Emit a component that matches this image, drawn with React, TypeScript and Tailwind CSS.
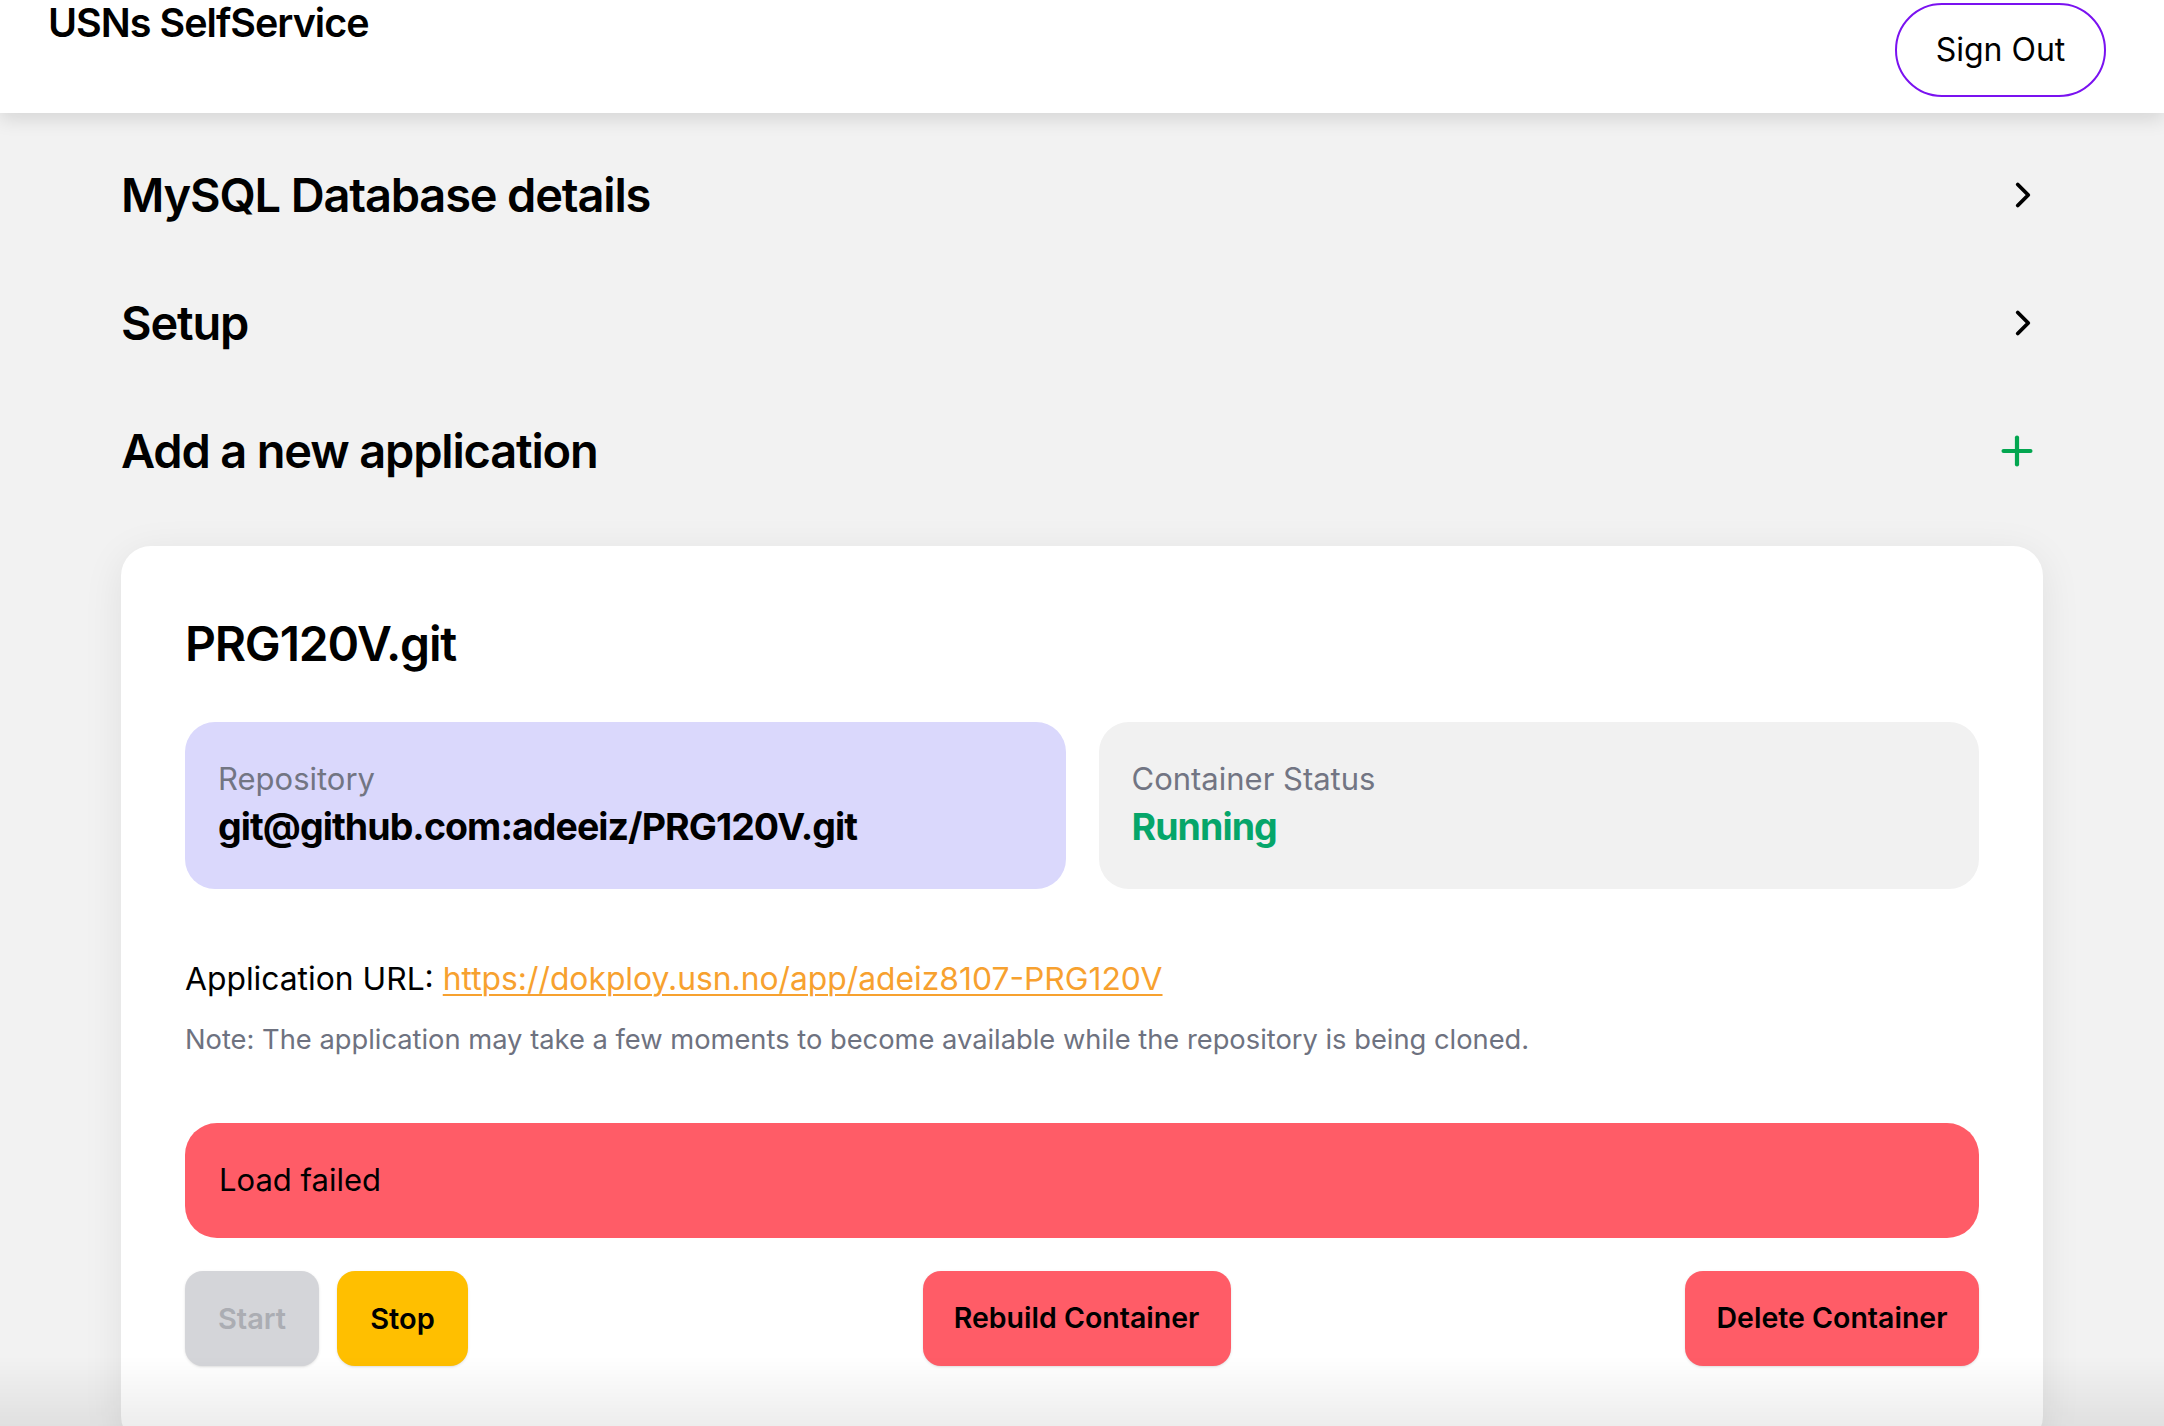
import { ChevronRight, Plus } from "lucide-react";

function SectionRow({ title, icon }: { title: string; icon: "chevron" | "plus" }) {
  return (
    <div className="flex items-center justify-between h-[128px]">
      <h2 className="text-[47px] font-semibold tracking-tight text-black">{title}</h2>
      {icon === "chevron" ? (
        <ChevronRight className="w-[42px] h-[42px] text-black mr-[-1px]" strokeWidth={2.2} />
      ) : (
        <Plus className="w-[46px] h-[46px] text-[#03a650] mr-[3px]" strokeWidth={2.2} />
      )}
    </div>
  );
}

function InfoBox({ label, value, tone }: { label: string; value: string; tone: "repo" | "status" }) {
  return (
    <div
      className={
        tone === "repo"
          ? "flex-1 h-[167px] rounded-[30px] bg-[#dad8fc] px-[33px] flex flex-col justify-center"
          : "flex-1 h-[167px] rounded-[30px] bg-[#f1f1f1] px-[33px] flex flex-col justify-center"
      }
    >
      <span className="text-[31px] text-[#727583] leading-tight">{label}</span>
      <span
        className={
          tone === "repo"
            ? "text-[37.5px] font-bold text-black leading-tight mt-[6px] tracking-tight"
            : "text-[37.5px] font-bold text-[#06a66a] leading-tight mt-[6px] tracking-tight"
        }
      >
        {value}
      </span>
    </div>
  );
}

export default function App() {
  return (
    <div className="min-h-screen bg-[#f2f2f2] font-['Inter','Noto_Sans',sans-serif] text-black overflow-hidden relative">
      <header className="bg-white h-[113px] flex items-start justify-between pl-[48px] pr-[58px] shadow-[0_6px_18px_rgba(0,0,0,0.12)] relative z-10">
        <h1 className="text-[39.5px] font-semibold tracking-tight leading-none mt-[4px]">USNs SelfService</h1>
        <button className="mt-[3px] h-[94px] w-[211px] rounded-full border-2 border-[#7a12f0] bg-white text-[32px] text-black">
          Sign Out
        </button>
      </header>

      <main className="px-[121px] pt-[18px]">
        <SectionRow title="MySQL Database details" icon="chevron" />
        <SectionRow title="Setup" icon="chevron" />
        <SectionRow title="Add a new application" icon="plus" />

        <section className="mt-[31px] bg-white rounded-[30px] shadow-[0_8px_40px_rgba(0,0,0,0.08)] p-[64px] pb-[80px]">
          <h3 className="text-[48px] font-semibold tracking-tight leading-none mt-[10px]">PRG120V.git</h3>

          <div className="flex gap-[33px] mt-[54px]">
            <InfoBox label="Repository" value="git@github.com:adeeiz/PRG120V.git" tone="repo" />
            <InfoBox label="Container Status" value="Running" tone="status" />
          </div>

          <p className="mt-[70px] text-[31.8px] leading-tight">
            Application URL:{" "}
            <a className="text-[#f7a12f] underline underline-offset-4 decoration-2">https://dokploy.usn.no/app/adeiz8107-PRG120V</a>
          </p>
          <p className="mt-[24px] text-[27.3px] text-[#6e7280] leading-tight">
            Note: The application may take a few moments to become available while the repository is being cloned.
          </p>

          <div className="mt-[66px] h-[115px] rounded-[32px] bg-[#ff5c67] flex items-center px-[34px]">
            <span className="text-[31px] text-black">Load failed</span>
          </div>

          <div className="mt-[33px] flex items-center justify-between">
            <div className="flex gap-[18px]">
              <button className="h-[95px] w-[134px] rounded-[18px] bg-[#d4d5d9] text-[29px] font-semibold text-[#abadb3] shadow-sm">
                Start
              </button>
              <button className="h-[95px] w-[131px] rounded-[18px] bg-[#ffbf00] text-[29px] font-semibold text-black shadow-sm">
                Stop
              </button>
            </div>
            <button className="h-[95px] w-[308px] rounded-[18px] bg-[#ff5c67] text-[28.5px] font-semibold text-black shadow-sm">
              Rebuild Container
            </button>
            <button className="h-[95px] w-[294px] rounded-[18px] bg-[#ff5c67] text-[28.5px] font-semibold text-black shadow-sm">
              Delete Container
            </button>
          </div>
        </section>
      </main>

      <div className="fixed left-0 right-0 bottom-0 h-[70px] bg-gradient-to-b from-transparent to-[rgba(0,0,0,0.07)] pointer-events-none" />
    </div>
  );
}
